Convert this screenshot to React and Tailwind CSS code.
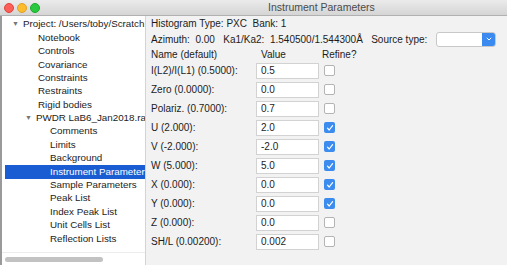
const tree = [
  { label: 'Project: /Users/toby/Scratch', indent: 12, arrow: true },
  { label: 'Notebook', indent: 38 },
  { label: 'Controls', indent: 38 },
  { label: 'Covariance', indent: 38 },
  { label: 'Constraints', indent: 38 },
  { label: 'Restraints', indent: 38 },
  { label: 'Rigid bodies', indent: 38 },
  { label: 'PWDR LaB6_Jan2018.raw', indent: 25, arrow: true },
  { label: 'Comments', indent: 50 },
  { label: 'Limits', indent: 50 },
  { label: 'Background', indent: 50 },
  { label: 'Instrument Parameters', indent: 50, selected: true },
  { label: 'Sample Parameters', indent: 50 },
  { label: 'Peak List', indent: 50 },
  { label: 'Index Peak List', indent: 50 },
  { label: 'Unit Cells List', indent: 50 },
  { label: 'Reflection Lists', indent: 50 },
]

const params = [
  { name: 'I(L2)/I(L1) (0.5000):', value: '0.5', refine: false },
  { name: 'Zero (0.0000):', value: '0.0', refine: false },
  { name: 'Polariz. (0.7000):', value: '0.7', refine: false },
  { name: 'U (2.000):', value: '2.0', refine: true },
  { name: 'V (-2.000):', value: '-2.0', refine: true },
  { name: 'W (5.000):', value: '5.0', refine: true },
  { name: 'X (0.000):', value: '0.0', refine: true },
  { name: 'Y (0.000):', value: '0.0', refine: true },
  { name: 'Z (0.000):', value: '0.0', refine: false },
  { name: 'SH/L (0.00200):', value: '0.002', refine: false },
]

function Checkbox({ checked }) {
  if (checked) {
    return (
      <div className="w-[11px] h-[11px] rounded-[2px] bg-[#3c8cf0] flex items-center justify-center">
        <svg width="8" height="8" viewBox="0 0 8 8">
          <path d="M1.5 4.2 L3.2 6 L6.6 1.6" stroke="white" strokeWidth="1.2" fill="none" strokeLinecap="round" strokeLinejoin="round" />
        </svg>
      </div>
    )
  }
  return <div className="w-[11px] h-[11px] rounded-[2px] bg-white border border-[#b4b4b4]" />
}

export default function App() {
  return (
    <div className="w-[507px] h-[265px] flex flex-col overflow-hidden bg-[#f2f2f2] text-[#1c1c1c] text-[10px]" style={{ fontFamily: '"Liberation Sans", Arial, sans-serif' }}>
      {/* title bar */}
      <div className="h-[16px] flex items-center bg-gradient-to-b from-[#ebebeb] to-[#d5d5d5] border-b border-[#b1b1b1] relative">
        <div className="flex items-center gap-[3px] pl-[4px]">
          <span className="w-[10px] h-[10px] rounded-full bg-[#fc5f57] border border-[#e0443e]" />
          <span className="w-[10px] h-[10px] rounded-full bg-[#fdbc2e] border border-[#dea123]" />
          <span className="w-[10px] h-[10px] rounded-full bg-[#28c940] border border-[#1aab29]" />
        </div>
        <div className="absolute left-[268px] top-0 h-[16px] flex items-center text-[#4a4a4a] text-[10.5px]">Instrument Parameters</div>
      </div>

      <div className="flex flex-1 min-h-0">
        {/* tree */}
        <div className="w-[146px] flex flex-col bg-white border-l-[2px] border-[#9a9a9a] border-r border-r-[#d4d4d4] text-[9.8px]">
          <div className="flex-1 pt-[2px] overflow-hidden">
            {tree.map((t) => (
              <div
                key={t.label}
                className={'h-[13.4px] flex items-center whitespace-nowrap overflow-hidden ' + (t.selected ? 'bg-[#1a5cd2] text-white ml-[3px]' : '')}
                style={{ paddingLeft: t.selected ? t.indent - 5 : t.indent - 2 }}
              >
                {t.arrow && <span className="text-[#777] text-[7px] mr-[4px]">▼</span>}
                <span>{t.label}</span>
              </div>
            ))}
          </div>
          <div className="h-[13px] border-t border-[#ececec] flex items-center pl-[3px]">
            <div className="w-[98px] h-[5px] rounded-full bg-[#c2c2c2]" />
          </div>
        </div>

        {/* params */}
        <div className="flex-1 pl-[5px]">
          <div className="h-[15px] flex items-center">Histogram Type: PXC&nbsp; Bank: 1</div>
          <div className="h-[16px] flex items-center">
            <span className="w-[285px] whitespace-nowrap">Azimuth:&nbsp; 0.00&nbsp;&nbsp; Ka1/Ka2:&nbsp; 1.540500/1.544300Å&nbsp;&nbsp; Source type:</span>
            <div className="w-[60px] h-[15px] flex rounded-[3px] border border-[#c8c8c8] bg-white overflow-hidden">
              <div className="flex-1" />
              <div className="w-[13px] bg-[#3b8af0] flex items-center justify-center">
                <svg width="6" height="4" viewBox="0 0 6 4">
                  <path d="M0.8 0.8 L3 3 L5.2 0.8" stroke="white" strokeWidth="1" fill="none" />
                </svg>
              </div>
            </div>
          </div>
          <div className="h-[14px] flex items-center">
            <span className="w-[110px]">Name (default)</span>
            <span className="w-[61px]">Value</span>
            <span>Refine?</span>
          </div>
          {params.map((p) => (
            <div key={p.name} className="h-[19px] flex items-center">
              <span className="w-[105px] whitespace-nowrap">{p.name}</span>
              <div className="w-[63px] h-[16px] bg-white border border-[#d2d2d2] flex items-center pl-[4px]">{p.value}</div>
              <div className="ml-[5px]">
                <Checkbox checked={p.refine} />
              </div>
            </div>
          ))}
        </div>
      </div>
    </div>
  )
}
